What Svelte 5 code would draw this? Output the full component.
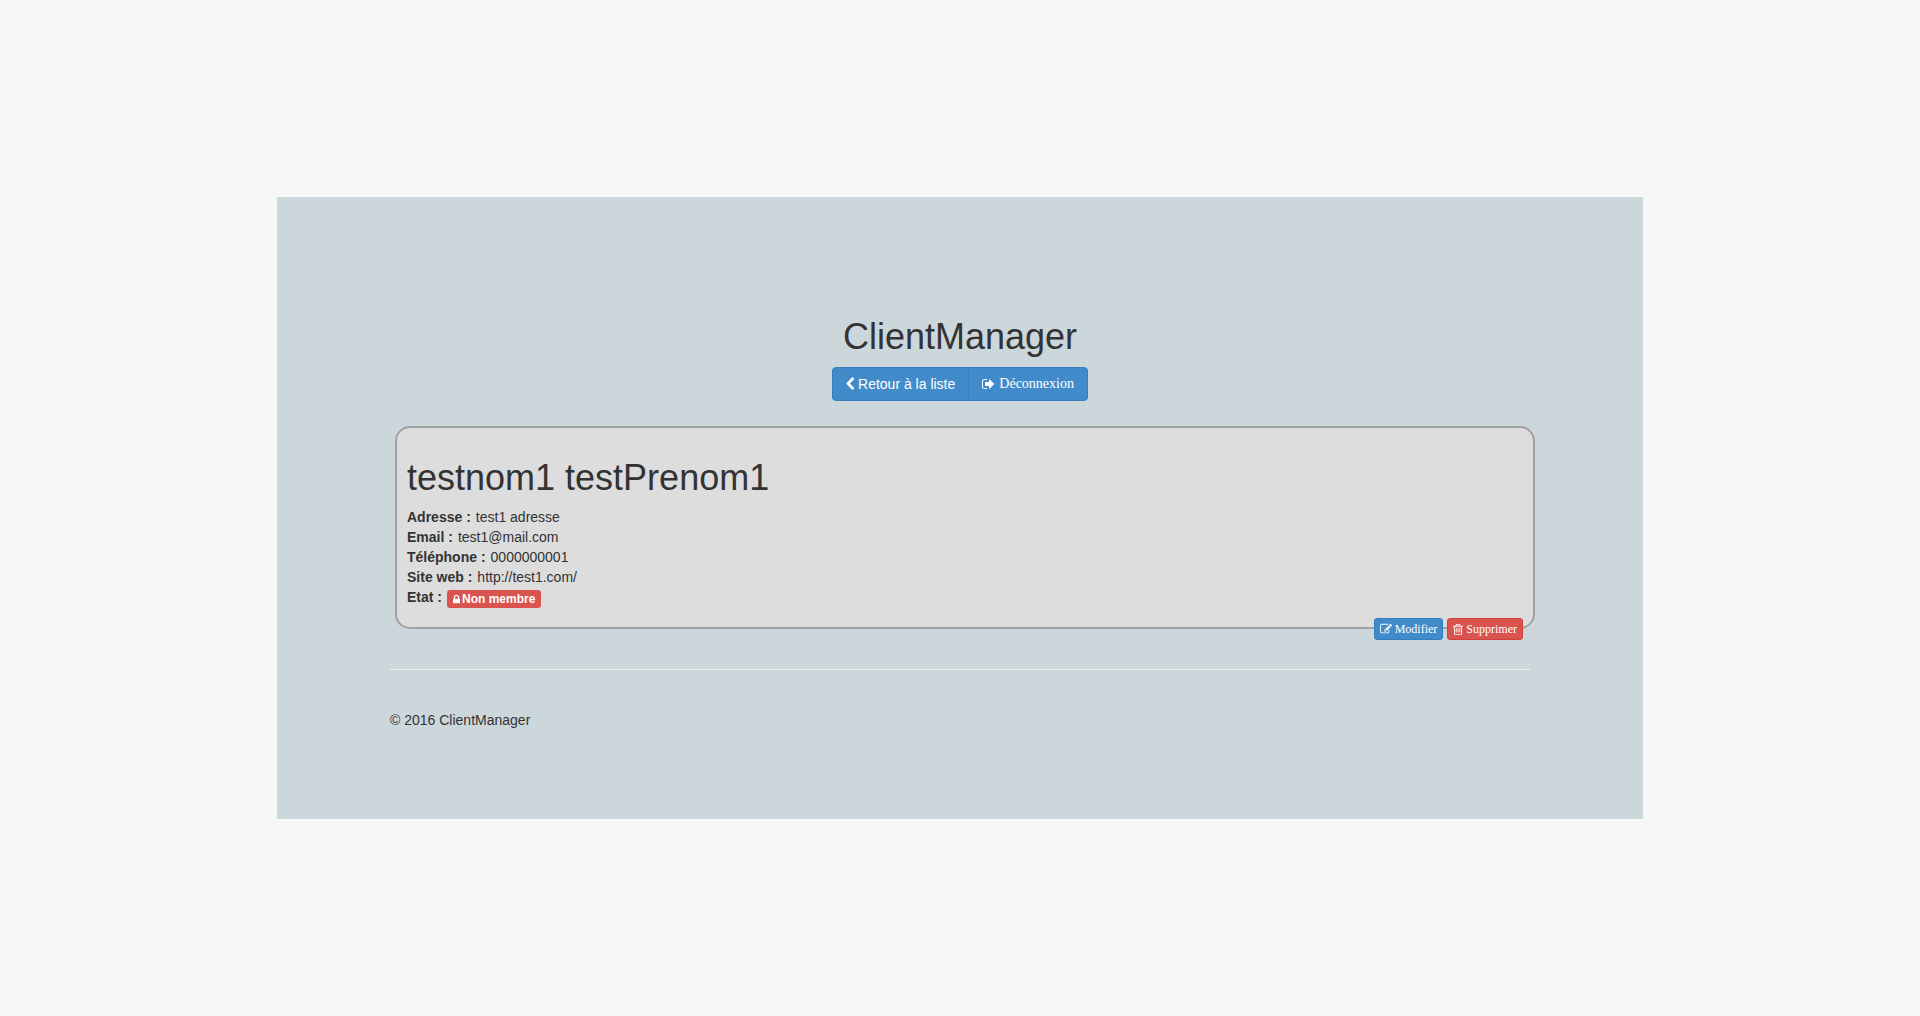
<script>
  const icons = {
    chevron: {
      box: '384 0 1152 1792',
      width: 9,
      d: 'M1427 301l-531 531 531 531q19 19 19 45t-19 45l-166 166q-19 19-45 19t-45-19l-742-742q-19-19-19-45t19-45l742-742q19-19 45-19t45 19l166 166q19 19 19 45t-19 45z'
    },
    signOut: {
      box: '64 0 1664 1792',
      width: 13,
      d: 'M704 1440q0 4 1 20t.5 26.5-3 23.5-10 19.5-20.5 6.5h-320q-119 0-203.5-84.5t-84.5-203.5v-704q0-119 84.5-203.5t203.5-84.5h320q13 0 22.5 9.5t9.5 22.5q0 4 1 20t.5 26.5-3 23.5-10 19.5-20.5 6.5h-320q-66 0-113 47t-47 113v704q0 66 47 113t113 47h312l11.5 1 11.5 3 8 5.5 7 9 2 13.5zm928-544q0 26-19 45l-544 544q-19 19-45 19t-45-19-19-45v-288h-448q-26 0-45-19t-19-45v-384q0-26 19-45t45-19h448v-288q0-26 19-45t45-19 45 19l544 544q19 19 19 45z'
    },
    edit: {
      box: '0 0 1792 1792',
      width: 12,
      d: 'M888 1184l116-116-152-152-116 116v56h96v96h56zm440-720q-16-16-33 1l-350 350q-17 17-1 33t33-1l350-350q17-17 1-33zm80 594v190q0 119-84.5 203.5t-203.5 84.5h-832q-119 0-203.5-84.5t-84.5-203.5v-832q0-119 84.5-203.5t203.5-84.5h832q63 0 117 25 15 7 18 23 3 17-9 29l-49 49q-14 14-32 8-23-6-45-6h-832q-66 0-113 47t-47 113v832q0 66 47 113t113 47h832q66 0 113-47t47-113v-126q0-13 9-22l64-64q15-15 35-7t20 29zm-96-738l288 288-672 672h-288v-288zm444 132l-92 92-288-288 92-92q28-28 68-28t68 28l152 152q28 28 28 68t-28 68z'
    },
    trash: {
      box: '192 0 1408 1792',
      width: 10,
      d: 'M704 736v576q0 14-9 23t-23 9h-64q-14 0-23-9t-9-23v-576q0-14 9-23t23-9h64q14 0 23 9t9 23zm256 0v576q0 14-9 23t-23 9h-64q-14 0-23-9t-9-23v-576q0-14 9-23t23-9h64q14 0 23 9t9 23zm256 0v576q0 14-9 23t-23 9h-64q-14 0-23-9t-9-23v-576q0-14 9-23t23-9h64q14 0 23 9t9 23zm128 724v-948h-896v948q0 22 7 40.5t14.5 27 10.5 8.5h832q3 0 10.5-8.5t14.5-27 7-40.5zm-672-1076h448l-48-117q-7-9-17-11h-317q-10 2-17 11zm928 32v64q0 14-9 23t-23 9h-96v948q0 83-47 143.5t-113 60.5h-832q-66 0-113-58.5t-47-141.5v-952h-96q-14 0-23-9t-9-23v-64q0-14 9-23t23-9h309l70-167q15-37 54-63t79-26h320q40 0 79 26t54 63l70 167h309q14 0 23 9t9 23z'
    },
    lock: {
      box: '320 0 1152 1792',
      width: 7,
      d: 'M640 768h512v-192q0-106-75-181t-181-75-181 75-75 181v192zm832 96v576q0 40-28 68t-68 28h-960q-40 0-68-28t-28-68v-576q0-40 28-68t68-28h32v-192q0-184 132-316t316-132 316 132 132 316v192h32q40 0 68 28t28 68z'
    }
  };

  const client = {
    name: 'testnom1 testPrenom1',
    status: 'Non membre',
    fields: [
      ['Adresse', 'test1 adresse'],
      ['Email', 'test1@mail.com'],
      ['Téléphone', '0000000001'],
      ['Site web', 'http://test1.com/']
    ]
  };
</script>

{#snippet icon(shape)}
  <svg class="icon" viewBox={shape.box} width={shape.width} aria-hidden="true"><path d={shape.d} /></svg>
{/snippet}

<div class="page">
  <div class="panel">
    <div class="container">
      <header>
        <h1>ClientManager</h1>
        <nav class="group">
          <a class="btn" href="#liste">{@render icon(icons.chevron)}<span>Retour à la liste</span></a>
          <a class="btn serif" href="#deconnexion">{@render icon(icons.signOut)}<span>Déconnexion</span></a>
        </nav>
      </header>

      <main class="card">
        <h1>{client.name}</h1>
        <dl>
          {#each client.fields as [label, value]}
            <div class="row"><dt>{label} :</dt><dd>{value}</dd></div>
          {/each}
          <div class="row">
            <dt>Etat :</dt>
            <dd class="badge">{@render icon(icons.lock)}<span>{client.status}</span></dd>
          </div>
        </dl>
        <div class="actions">
          <button type="button" class="btn small serif">{@render icon(icons.edit)}<span>Modifier</span></button>
          <button type="button" class="btn small serif danger">{@render icon(icons.trash)}<span>Supprimer</span></button>
        </div>
      </main>

      <hr />
      <footer>© 2016 ClientManager</footer>
    </div>
  </div>
</div>

<style>
  :global(body) {
    margin: 0;
    background: #f7f7f7;
  }
  .page {
    box-sizing: border-box;
    min-height: 100vh;
    display: flex;
    align-items: center;
    justify-content: center;
    font: 14px/20px 'Liberation Sans', Arial, sans-serif;
    color: #333;
  }
  .panel {
    box-sizing: border-box;
    width: 100%;
    max-width: 1366px;
    padding: 120px 15px 89px;
    background: #ccd7dc;
  }
  .container {
    max-width: 1140px;
    margin: 0 auto;
  }
  header {
    display: flex;
    flex-direction: column;
    align-items: center;
    gap: 10px;
  }
  h1 {
    margin: 0;
    font-size: 36px;
    line-height: 40px;
    font-weight: 500;
  }
  .group {
    display: flex;
  }
  .btn {
    display: flex;
    align-items: center;
    gap: 3px;
    padding: 6px 13px;
    border: 1px solid #357ebd;
    border-radius: 4px;
    background: #428bca;
    color: #fff;
    font: inherit;
    text-decoration: none;
    white-space: nowrap;
    cursor: pointer;
  }
  .group .btn:first-child {
    border-radius: 4px 0 0 4px;
  }
  .group .btn:last-child {
    margin-left: -1px;
    border-radius: 0 4px 4px 0;
  }
  .btn.serif {
    gap: 4px;
    font-family: 'Liberation Serif', 'Times New Roman', serif;
  }
  .icon {
    flex: none;
    fill: currentColor;
  }
  .card {
    margin: 25px -5px 0 5px;
    padding: 30px 10px 0;
    border: 2px solid #a1a1a1;
    border-radius: 15px;
    background: #ddd;
  }
  dl {
    margin: 9px 0 10px;
  }
  .row {
    display: flex;
    align-items: flex-start;
    gap: 5px;
  }
  dt {
    font-weight: 700;
  }
  dd {
    margin: 0;
  }
  .badge {
    display: flex;
    align-items: center;
    gap: 2px;
    padding: 0 6px;
    margin-top: 3px;
    border-radius: 3px;
    background: #d9534f;
    color: #fff;
    font-size: 12px;
    line-height: 18px;
    font-weight: 700;
  }
  .actions {
    display: flex;
    justify-content: flex-end;
    gap: 4px;
    margin-bottom: -13px;
  }
  .btn.small {
    gap: 3px;
    padding: 1px 5px;
    border-radius: 3px;
    font-size: 12px;
    line-height: 18px;
  }
  .danger {
    border-color: #d43f3a;
    background: #d9534f;
  }
  hr {
    height: 1px;
    margin: 40px 0;
    border: 0;
    background: #eee;
  }
</style>
